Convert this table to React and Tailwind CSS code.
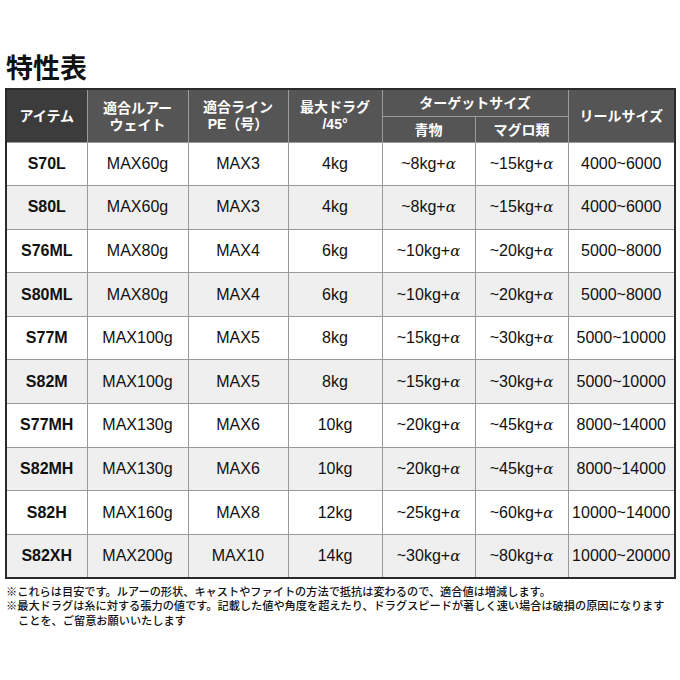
import React from "react";

const rows = [
  ["S70L", "MAX60g", "MAX3", "4kg", "~8kg+", "~15kg+", "4000~6000"],
  ["S80L", "MAX60g", "MAX3", "4kg", "~8kg+", "~15kg+", "4000~6000"],
  ["S76ML", "MAX80g", "MAX4", "6kg", "~10kg+", "~20kg+", "5000~8000"],
  ["S80ML", "MAX80g", "MAX4", "6kg", "~10kg+", "~20kg+", "5000~8000"],
  ["S77M", "MAX100g", "MAX5", "8kg", "~15kg+", "~30kg+", "5000~10000"],
  ["S82M", "MAX100g", "MAX5", "8kg", "~15kg+", "~30kg+", "5000~10000"],
  ["S77MH", "MAX130g", "MAX6", "10kg", "~20kg+", "~45kg+", "8000~14000"],
  ["S82MH", "MAX130g", "MAX6", "10kg", "~20kg+", "~45kg+", "8000~14000"],
  ["S82H", "MAX160g", "MAX8", "12kg", "~25kg+", "~60kg+", "10000~14000"],
  ["S82XH", "MAX200g", "MAX10", "14kg", "~30kg+", "~80kg+", "10000~20000"],
];

const jp = "font-['Noto_Sans_CJK_JP',sans-serif]";
const latin = "font-['Liberation_Sans','Noto_Sans_CJK_JP',sans-serif]";
const th = "border border-[#9a9a9a] text-white font-bold text-[14px] leading-[17px] text-center align-middle p-0";
const td = "border border-[#9a9a9a] text-center align-middle p-0 text-[16px] text-[#111]";

const Alpha = () => <span className="italic font-['DejaVu_Serif',serif] text-[15px]">α</span>;

export default function App() {
  return (
    <div className="w-[680px] h-[680px] bg-white relative overflow-hidden">
      <div className="pl-[6px] pt-[50px]">
        <h1 className={`${jp} font-bold text-[27px] leading-[34px] text-[#111]`}>特性表</h1>
      </div>
      <div className="pl-[5px] pt-[4px]">
        <table className={`${jp} w-[669px] table-fixed border-collapse border-2 border-[#2a2a2a]`}>
          <colgroup>
            <col className="w-[81px]" />
            <col className="w-[101px]" />
            <col className="w-[100px]" />
            <col className="w-[94px]" />
            <col className="w-[93px]" />
            <col className="w-[93px]" />
            <col className="w-[107px]" />
          </colgroup>
          <thead>
            <tr className="h-[27px]">
              <th rowSpan={2} className={`${th} bg-[#3c3c3c]`}>アイテム</th>
              <th rowSpan={2} className={`${th} bg-[#555555]`}>適合ルアー<br />ウェイト</th>
              <th rowSpan={2} className={`${th} bg-[#555555]`}>適合ライン<br /><span className={latin}>PE</span>（号）</th>
              <th rowSpan={2} className={`${th} bg-[#555555]`}>最大ドラグ<br /><span className={latin}>/45°</span></th>
              <th colSpan={2} className={`${th} bg-[#555555]`}>ターゲットサイズ</th>
              <th rowSpan={2} className={`${th} bg-[#555555]`}>リールサイズ</th>
            </tr>
            <tr className="h-[26px]">
              <th className={`${th} bg-[#555555]`}>青物</th>
              <th className={`${th} bg-[#555555]`}>マグロ類</th>
            </tr>
          </thead>
          <tbody className={latin}>
            {rows.map((r, i) => (
              <tr key={r[0]} className={`h-[43.6px] ${i % 2 === 0 ? "bg-white" : "bg-[#efefef]"}`}>
                <td className={`${td} font-bold`}>{r[0]}</td>
                <td className={td}>{r[1]}</td>
                <td className={td}>{r[2]}</td>
                <td className={td}>{r[3]}</td>
                <td className={td}>{r[4]}<Alpha /></td>
                <td className={td}>{r[5]}<Alpha /></td>
                <td className={td}>{r[6]}</td>
              </tr>
            ))}
          </tbody>
        </table>
      </div>
      <div className={`${jp} pl-[6px] pt-[5px] text-[11.2px] leading-[14.5px] font-medium text-[#111] whitespace-nowrap`}>
        <p>※これらは目安です。ルアーの形状、キャストやファイトの方法で抵抗は変わるので、適合値は増減します。</p>
        <p>※最大ドラグは糸に対する張力の値です。記載した値や角度を超えたり、ドラグスピードが著しく速い場合は破損の原因になります</p>
        <p className="pl-[12px]">ことを、ご留意お願いいたします</p>
      </div>
    </div>
  );
}
